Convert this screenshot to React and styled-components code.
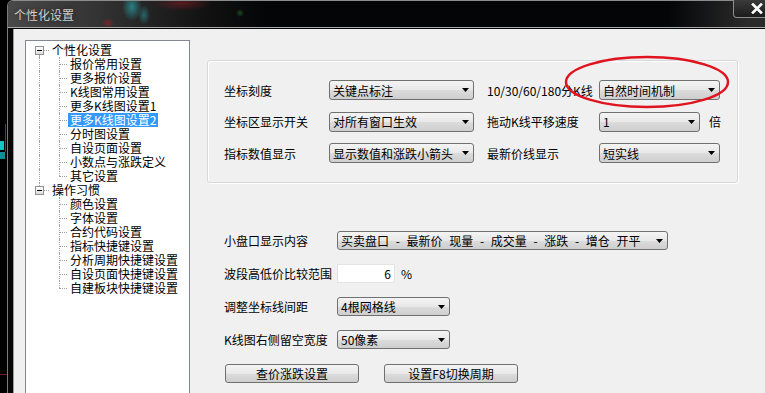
import React from 'react';
import styled, { createGlobalStyle } from 'styled-components';

const GlobalStyle = createGlobalStyle`
  html, body {
    margin: 0;
    padding: 0;
    background: #000;
  }
  body {
    font-family: "Noto Sans CJK SC", "Liberation Sans", sans-serif;
    font-size: 12px;
    color: #000;
  }
`;

const Screen = styled.div`
  position: relative;
  width: 765px;
  height: 393px;
  overflow: hidden;
  box-sizing: border-box;
  padding-left: 7px;
  display: flex;
  background:
    linear-gradient(#12c6c6, #12c6c6) 0 141px / 4px 9px no-repeat,
    linear-gradient(#0e8f95, #0e8f95) 0 152px / 5px 7px no-repeat,
    linear-gradient(#9c1f2a, #9c1f2a) 5px 124px / 1px 28px no-repeat,
    linear-gradient(#7a1820, #7a1820) 0 374px / 7px 1px no-repeat,
    #000;
`;

const Window = styled.div`
  flex: none;
  width: 800px;
  box-sizing: border-box;
  display: flex;
  flex-direction: column;
  border-left: 1px solid #7b7b7b;
  border-top: 1px solid #8c8c8c;
  border-top-left-radius: 6px;
  background: #070707;
`;

const TitleBar = styled.div`
  flex: none;
  height: 27px;
  box-sizing: border-box;
  display: flex;
  align-items: center;
  padding-left: 6px;
  border-bottom: 1px solid #a9a9a9;
  border-top-left-radius: 5px;
  color: #cfcfcf;
  background:
    radial-gradient(ellipse 10px 14px at 124px 6px, rgba(40, 200, 210, 0.55), transparent),
    radial-gradient(ellipse 6px 10px at 136px 14px, rgba(40, 200, 210, 0.4), transparent),
    radial-gradient(ellipse 30px 8px at 175px 2px, rgba(160, 30, 40, 0.45), transparent),
    radial-gradient(ellipse 6px 5px at 100px 22px, rgba(170, 30, 40, 0.6), transparent),
    radial-gradient(ellipse 4px 4px at 232px 12px, rgba(40, 140, 60, 0.5), transparent),
    linear-gradient(90deg, #4a4a4a 0, #333 90px, #111 200px, #040507 260px, #040507 660px, #2a2a2a 740px);
`;

const Title = styled.span`
  text-shadow: 0 0 6px rgba(0, 0, 0, 0.6);
`;

const CloseButton = styled.div`
  align-self: flex-start;
  margin: -1px 27px 0 auto;
  width: 47px;
  height: 18px;
  box-sizing: border-box;
  display: flex;
  align-items: center;
  justify-content: center;
  border: 1px solid #8e8e8e;
  border-top: none;
  border-radius: 0 0 4px 4px;
  background: linear-gradient(#3a3a3a, #1c1c1c);
`;

const Frame = styled.div`
  flex: 1;
  min-height: 0;
  display: flex;
  margin-top: 1px;
  padding-left: 5px;
`;

const Body = styled.div`
  flex: 1;
  display: flex;
  align-items: flex-start;
  border-left: 1px solid #9c9c9c;
  background: #f0f0f0;
  padding: 11px 0 0 11px;
  overflow: hidden;
`;

const TreePanel = styled.div`
  flex: none;
  width: 165px;
  height: 380px;
  box-sizing: border-box;
  border: 1px solid #828790;
  background: #fff;
  padding-top: 2px;
`;

const TreeRow = styled.div`
  display: flex;
  align-items: center;
  height: 14px;
`;

const Guide = styled.span`
  position: relative;
  flex: none;
  width: ${(p) => p.$w}px;
  height: 14px;
`;

const VLine = styled.span`
  position: absolute;
  left: ${(p) => p.$x}px;
  top: ${(p) => p.$top};
  bottom: ${(p) => p.$bottom};
  border-left: 1px dotted #a0a0a0;
`;

const HLine = styled.span`
  position: absolute;
  left: ${(p) => p.$from}px;
  width: ${(p) => p.$len}px;
  top: 7px;
  border-top: 1px dotted #a0a0a0;
`;

const ExpandBox = styled.span`
  position: absolute;
  left: 9px;
  top: 3px;
  width: 9px;
  height: 9px;
  box-sizing: border-box;
  border: 1px solid #919191;
  background: linear-gradient(#fff, #dcdcdc);
  &::after {
    content: '';
    position: absolute;
    left: 1px;
    top: 3px;
    width: 5px;
    border-top: 1px solid #000;
  }
`;

const NodeLabel = styled.span`
  padding: 0 2px;
  line-height: 14px;
  white-space: nowrap;
  background: ${(p) => (p.$selected ? '#3399ff' : 'transparent')};
  color: ${(p) => (p.$selected ? '#fff' : '#000')};
`;

const Content = styled.div`
  margin-left: 17px;
  padding-top: 20px;
  display: flex;
  flex-direction: column;
`;

const GroupBox = styled.div`
  width: 531px;
  height: 123px;
  box-sizing: border-box;
  border: 1px solid #d5d9dc;
  border-radius: 3px;
  box-shadow: inset 1px 1px 0 #fff, 1px 1px 0 #fff;
  padding: 19px 0 0 16px;
  display: flex;
  flex-direction: column;
  gap: 11.5px;
`;

const FormRow = styled.div`
  display: flex;
  align-items: center;
  height: ${(p) => p.$h || 20}px;
`;

const Label = styled.span`
  flex: none;
  width: ${(p) => p.$w}px;
  margin-left: ${(p) => p.$ml || 0}px;
  white-space: nowrap;
`;

const Select = styled.div`
  flex: none;
  width: ${(p) => p.$w}px;
  height: ${(p) => p.$h || 20}px;
  box-sizing: border-box;
  display: flex;
  align-items: center;
  padding: 0 4px 0 3px;
  border: 1px solid #707070;
  border-radius: 3px;
  background: linear-gradient(#f4f4f4, #e8e8e8 50%, #dcdcdc 51%, #cecece);
  white-space: nowrap;
  overflow: hidden;
`;

const SelectText = styled.span`
  flex: 1;
  overflow: hidden;
  word-spacing: ${(p) => p.$ws || 0}px;
`;

const Unit = styled.span`
  margin-left: ${(p) => p.$ml}px;
`;

const Lower = styled.div`
  margin-top: 48px;
  margin-left: 17px;
  display: flex;
  flex-direction: column;
  gap: 14px;
`;

const NumberBox = styled.div`
  width: 58px;
  height: 19px;
  box-sizing: border-box;
  border: 1px solid #e4e4e4;
  background: #fff;
  text-align: right;
  padding-right: 3px;
  line-height: 17px;
`;

const ButtonRow = styled.div`
  display: flex;
  gap: 25px;
  margin-left: 1px;
  margin-top: 1px;
`;

const Button = styled.div`
  width: 134px;
  height: 19px;
  box-sizing: border-box;
  border: 1px solid #707070;
  border-radius: 3px;
  background: linear-gradient(#f4f4f4, #e8e8e8 50%, #dcdcdc 51%, #cecece);
  text-align: center;
  line-height: 17px;
`;

const Ellipse = styled.svg`
  position: absolute;
  left: 563px;
  top: 55px;
  pointer-events: none;
`;

const tree = [
  {
    label: '个性化设置',
    children: [
      '报价常用设置',
      '更多报价设置',
      'K线图常用设置',
      '更多K线图设置1',
      '更多K线图设置2',
      '分时图设置',
      '自设页面设置',
      '小数点与涨跌定义',
      '其它设置',
    ],
  },
  {
    label: '操作习惯',
    children: [
      '颜色设置',
      '字体设置',
      '合约代码设置',
      '指标快捷键设置',
      '分析周期快捷键设置',
      '自设页面快捷键设置',
      '自建板块快捷键设置',
    ],
  },
];

const SELECTED = '更多K线图设置2';

function Arrow() {
  return (
    <svg width="7" height="4" viewBox="0 0 7 4">
      <polygon points="0,0 7,0 3.5,4" fill="#000" />
    </svg>
  );
}

function Dropdown({ w, h, ws, children }) {
  return (
    <Select $w={w} $h={h}>
      <SelectText $ws={ws}>{children}</SelectText>
      <Arrow />
    </Select>
  );
}

function Tree() {
  return (
    <TreePanel>
      {tree.map((node, i) => {
        const lastRoot = i === tree.length - 1;
        return (
          <React.Fragment key={node.label}>
            <TreeRow>
              <Guide $w={24}>
                {i > 0 && <VLine $x={13} $top="0" $bottom="11px" />}
                {!lastRoot && <VLine $x={13} $top="12px" $bottom="0" />}
                <ExpandBox />
                <HLine $from={18} $len={5} />
              </Guide>
              <NodeLabel>{node.label}</NodeLabel>
            </TreeRow>
            {node.children.map((child, j) => {
              const lastChild = j === node.children.length - 1;
              return (
                <TreeRow key={child}>
                  <Guide $w={24}>
                    {!lastRoot && <VLine $x={13} $top="0" $bottom="0" />}
                  </Guide>
                  <Guide $w={18}>
                    <VLine $x={9} $top="0" $bottom={lastChild ? '7px' : '0'} />
                    <HLine $from={9} $len={8} />
                  </Guide>
                  <NodeLabel $selected={child === SELECTED}>{child}</NodeLabel>
                </TreeRow>
              );
            })}
          </React.Fragment>
        );
      })}
    </TreePanel>
  );
}

export default function App() {
  return (
    <Screen>
      <GlobalStyle />
      <Window>
        <TitleBar>
          <Title>个性化设置</Title>
          <CloseButton>
            <svg width="12" height="11" viewBox="0 0 12 11">
              <path d="M2 1.5 L10 9.5 M10 1.5 L2 9.5" stroke="#fff" strokeWidth="2.6" strokeLinecap="square" />
            </svg>
          </CloseButton>
        </TitleBar>
        <Frame>
          <Body>
            <Tree />
            <Content>
              <GroupBox>
                <FormRow>
                  <Label $w={105}>坐标刻度</Label>
                  <Dropdown w={145}>关键点标注</Dropdown>
                  <Label $w={112} $ml={13}>10/30/60/180分K线</Label>
                  <Dropdown w={121}>自然时间机制</Dropdown>
                </FormRow>
                <FormRow>
                  <Label $w={105}>坐标区显示开关</Label>
                  <Dropdown w={145}>对所有窗口生效</Dropdown>
                  <Label $w={112} $ml={13}>拖动K线平移速度</Label>
                  <Dropdown w={101}>1</Dropdown>
                  <Unit $ml={9}>倍</Unit>
                </FormRow>
                <FormRow>
                  <Label $w={105}>指标数值显示</Label>
                  <Dropdown w={145}>显示数值和涨跌小箭头</Dropdown>
                  <Label $w={112} $ml={13}>最新价线显示</Label>
                  <Dropdown w={121}>短实线</Dropdown>
                </FormRow>
              </GroupBox>
              <Lower>
                <FormRow $h={19}>
                  <Label $w={113}>小盘口显示内容</Label>
                  <Dropdown w={331} h={19} ws={4}>
                    买卖盘口 - 最新价 现量 - 成交量 - 涨跌 - 增仓 开平
                  </Dropdown>
                </FormRow>
                <FormRow $h={19}>
                  <Label $w={113}>波段高低价比较范围</Label>
                  <NumberBox>6</NumberBox>
                  <Unit $ml={6}>%</Unit>
                </FormRow>
                <FormRow $h={19}>
                  <Label $w={113}>调整坐标线间距</Label>
                  <Dropdown w={113} h={19}>4根网格线</Dropdown>
                </FormRow>
                <FormRow $h={19}>
                  <Label $w={113}>K线图右侧留空宽度</Label>
                  <Dropdown w={113} h={19}>50像素</Dropdown>
                </FormRow>
                <ButtonRow>
                  <Button>查价涨跌设置</Button>
                  <Button>设置F8切换周期</Button>
                </ButtonRow>
              </Lower>
            </Content>
          </Body>
        </Frame>
      </Window>
      <Ellipse width="170" height="56" viewBox="0 0 170 56">
        <ellipse cx="84" cy="27" rx="81" ry="25" fill="none" stroke="#e0141e" strokeWidth="2.5" />
      </Ellipse>
    </Screen>
  );
}
